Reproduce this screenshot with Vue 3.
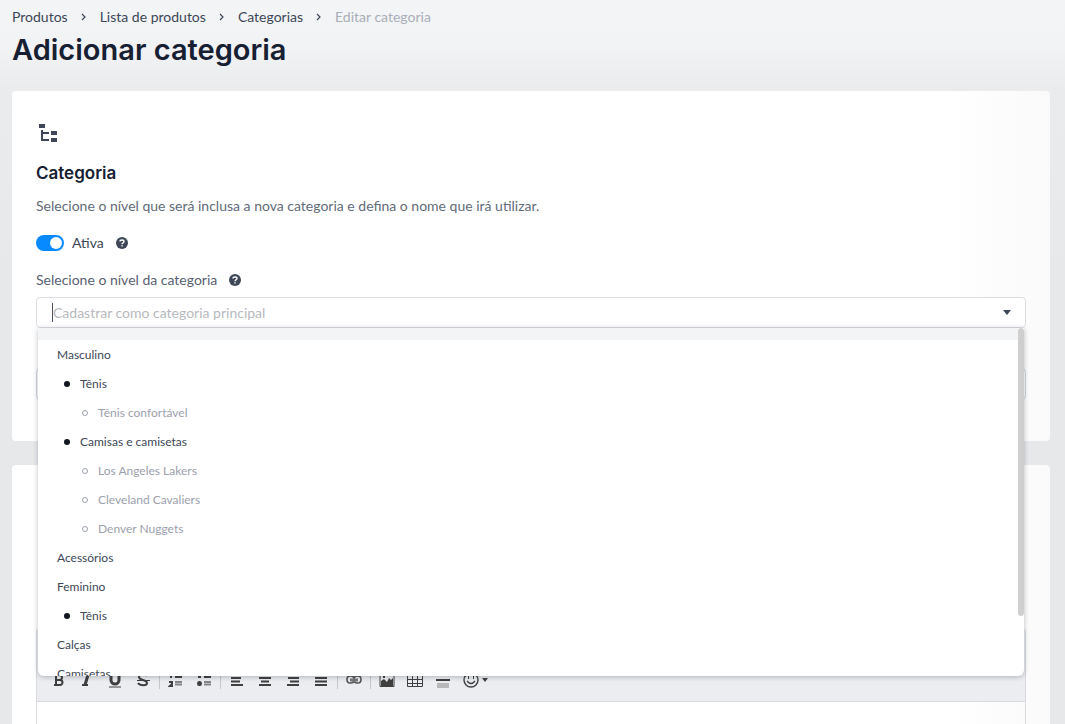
<script setup>
import { ref } from 'vue'

const trail = ['Produtos', 'Lista de produtos', 'Categorias']
const active = ref(true)
const options = [
  { text: 'Masculino', level: 0 },
  { text: 'Tênis', level: 1 },
  { text: 'Tênis confortável', level: 2 },
  { text: 'Camisas e camisetas', level: 1 },
  { text: 'Los Angeles Lakers', level: 2 },
  { text: 'Cleveland Cavaliers', level: 2 },
  { text: 'Denver Nuggets', level: 2 },
  { text: 'Acessórios', level: 0 },
  { text: 'Feminino', level: 0 },
  { text: 'Tênis', level: 1 },
  { text: 'Calças', level: 0 },
  { text: 'Camisetas', level: 0 },
]
const solid = (d, color = 'currentColor') => ({ d, fill: color })
const line = (d, w = 2, color = 'currentColor') => ({ d, stroke: color, 'stroke-width': w, fill: 'none' })
const groups = [
  [
    { name: 'Negrito', shapes: [line('M4 3H8.500A2.500 2.500 0 0 1 8.500 8H4M5 3V13H9A2.500 2.500 0 0 0 9 8', 2), line('M3 13H6M3 3H6')] },
    { name: 'Itálico', shapes: [line('M5 3H11M3 13H9'), line('M9 3L6 13', 3)] },
    { name: 'Sublinhado', shapes: [line('M4 2V8A4 4 0 0 0 12 8V2', 3), line('M2 15H14', 1)] },
    { name: 'Tachado', shapes: [line('M12 4C10 1 4 2 4 5C4 9 12 7 12 11C12 14 5 14 3 11', 2), line('M2 8.500H15', 1)] },
  ],
  [
    { name: 'Lista numerada', shapes: [line('M3 2V6M1 10H4V12L2 14H5', 2), line('M7 5H14', 2), line('M7 10H14M7 12.500H14', 2, '#858585')] },
    { name: 'Lista', shapes: [solid('M2 3H5V6H2ZM3 9H4Q6 9 6 11.500Q6 14 4 14H3Q1 14 1 11.500Q1 9 3 9'), line('M8 5H15', 2), line('M8 10H15M8 12.500H15', 2, '#858585')] },
  ],
  [
    { name: 'Alinhar à esquerda', shapes: [line('M2 3H14M2 6H12M2 9.500H11M2 13H14')] },
    { name: 'Centralizar', shapes: [line('M2 3H14M2 6H14M4 9.500H12M2 13H14')] },
    { name: 'Alinhar à direita', shapes: [line('M2 3H14M3 6H14M5 9.500H14M2 13H14')] },
    { name: 'Justificar', shapes: [line('M2 3H14M2 6H14M2 9.500H14M2 13H14')] },
  ],
  [
    { name: 'Link', shapes: [line('M4 4H5Q8 4 8 7.500Q8 11 5 11H4Q1 11 1 7.500Q1 4 4 4M11 4H12Q15 4 15 7.500Q15 11 12 11H11Q8 11 8 7.500Q8 4 11 4', 1.6, '#555'), line('M4 8H12', 3, '#777')] },
  ],
  [
    { name: 'Imagem', shapes: [line('M1 2H15V14.500H1Z', 1), solid('M2 14V9L5 7L8 10L10 6L12 8L14 6V14ZM4 4H6V6H4Z')] },
    { name: 'Tabela', shapes: [line('M.5 3.500H15.500V14.500H.5ZM.5 7.500H15.500M.5 11.500H15.500M5.500 3V14M10.500 3V14', 1)] },
    { name: 'Linha horizontal', shapes: [line('M1 8H15'), solid('M2 11H14V16H2Z', '#b8b8b8')] },
  ],
]
</script>

<template>
  <main class="page">
    <header>
      <nav class="crumbs" aria-label="Navegação">
        <template v-for="item in trail" :key="item">
          <a href="#">{{ item }}</a>
          <svg class="chevron" viewBox="0 0 6 8"><path d="M1 1L4 4L1 7" fill="none" stroke="currentColor" stroke-width="1.200" /></svg>
        </template>
        <span class="current">Editar categoria</span>
      </nav>
      <h1>Adicionar categoria</h1>
    </header>

    <section class="card">
      <svg class="tree" viewBox="0 0 20 20" fill="currentColor">
        <path d="M1 1H7V5H1ZM13 8H19V12H13ZM13 15H19V19H13Z" />
        <path d="M4 7V17H11M4 10H11" fill="none" stroke="currentColor" stroke-width="2" />
      </svg>
      <h2>Categoria</h2>
      <p>Selecione o nível que será inclusa a nova categoria e defina o nome que irá utilizar.</p>
      <div class="row toggle-row">
        <input id="ativa" v-model="active" class="switch" type="checkbox" role="switch">
        <label for="ativa">Ativa</label>
        <button class="help" type="button" aria-label="Ajuda">
          <svg viewBox="0 0 12 12"><circle cx="6" cy="6" r="6" fill="currentColor" /><path d="M4 4.500C4 2.500 8 2.500 8 4.500C8 6 6 5.800 6 7.200M6 8.300V9.600" fill="none" stroke="#fff" stroke-width="1.400" /></svg>
        </button>
      </div>
      <div class="row level-row">
        <label for="nivel">Selecione o nível da categoria</label>
        <button class="help" type="button" aria-label="Ajuda">
          <svg viewBox="0 0 12 12"><circle cx="6" cy="6" r="6" fill="currentColor" /><path d="M4 4.500C4 2.500 8 2.500 8 4.500C8 6 6 5.800 6 7.200M6 8.300V9.600" fill="none" stroke="#fff" stroke-width="1.400" /></svg>
        </button>
      </div>
      <div class="combo">
        <div class="control">
          <span class="caret" />
          <input id="nivel" type="text" placeholder="Cadastrar como categoria principal" role="combobox" aria-expanded="true" aria-controls="niveis">
          <svg class="arrow" viewBox="0 0 8 5"><path d="M0 0H8L4 5Z" fill="currentColor" /></svg>
        </div>
        <div class="menu">
          <ul id="niveis" role="listbox">
            <li class="blank" role="option" aria-label="Categoria principal" />
            <li v-for="(option, i) in options" :key="i" :class="'level' + option.level" role="option">
              <span v-if="option.level" class="bullet" />{{ option.text }}
            </li>
          </ul>
          <div class="track"><div class="thumb" /></div>
        </div>
      </div>
      <input class="field" type="text" aria-label="Nome da categoria">
    </section>

    <section class="card description">
      <div class="editor">
        <div class="toolbar">
          <template v-for="(group, g) in groups" :key="g">
            <button v-for="tool in group" :key="tool.name" class="tool" type="button" :aria-label="tool.name">
              <svg viewBox="0 0 16 16"><path v-for="(shape, s) in tool.shapes" :key="s" v-bind="shape" /></svg>
            </button>
            <span v-if="g < groups.length - 1" class="divider" />
          </template>
          <button class="tool smile" type="button" aria-label="Emoji">
            <svg viewBox="0 0 16 16"><circle cx="8" cy="8" r="7" fill="none" stroke="currentColor" stroke-width="1.400" /><path d="M4 9Q8 14 12 9" fill="none" stroke="currentColor" stroke-width="1.400" /><path d="M5 4H6V7H5ZM10 4H11V7H10Z" fill="currentColor" /></svg>
            <svg class="mini" viewBox="0 0 6 4"><path d="M0 0H6L3 4Z" fill="currentColor" /></svg>
          </button>
        </div>
        <textarea aria-label="Descrição" />
      </div>
    </section>
  </main>
</template>

<style>
body { margin: 0; }
</style>

<style scoped>
* { box-sizing: border-box; }
.page {
  min-height: 100vh;
  padding: 8px 15px 0 12px;
  display: flex;
  flex-direction: column;
  color: #3d4757;
  font: 14px/18px Lato, "Noto Sans", sans-serif;
  background: linear-gradient(#f4f5f7 0, #f1f2f4 50px, #eaebed 92px, #e7e8ea 300px, #e7e8ea 100%);
}
.crumbs { display: flex; align-items: center; height: 18px; }
.crumbs a { color: #3d4757; text-decoration: none; }
.chevron { width: 6px; height: 8px; margin: 0 13px; }
.current { color: #a9aeb9; }
h1 { margin: 5px 0 0; font: 600 29px/38px Inter, sans-serif; color: #172033; }
.card {
  margin-top: 22px;
  padding: 32px 24px 41px;
  border-radius: 4px;
  background: linear-gradient(90deg, #fff 90%, #fafafa);
}
.tree { display: block; width: 20px; height: 20px; margin-left: 2px; }
h2 { margin: 18px 0 0; font: 600 17px/24px Inter, sans-serif; color: #172033; }
p { margin: 12px 0 0; color: #626b7a; }
.row { display: flex; align-items: center; height: 18px; margin-top: 19px; }
.level-row label { color: #586171; }
.switch {
  appearance: none;
  width: 28px;
  height: 16px;
  margin: 0 8px 0 0;
  padding: 2px;
  border-radius: 8px;
  background: #b8bec8;
  display: flex;
}
.switch::before { content: ""; width: 12px; height: 12px; border-radius: 50%; background: #fff; }
.switch:checked { background: #078aff; justify-content: flex-end; }
.help { width: 12px; height: 12px; margin: 0 0 0 12px; padding: 0; border: 0; background: none; color: #3d4757; }
.help svg { display: block; width: 12px; height: 12px; }
.combo { position: relative; margin-top: 8px; }
.control {
  display: flex;
  align-items: center;
  height: 31px;
  padding: 0 14px 0 15px;
  border: 1px solid #dadde2;
  border-radius: 4px;
  background: #fff;
}
.caret { width: 1px; height: 19px; background: #4a5262; }
.control input { flex: 1; min-width: 0; height: 19px; padding: 0; border: 0; outline: 0; background: none; font: inherit; }
.control input::placeholder { color: #b7b9be; opacity: 1; }
.arrow { width: 8px; height: 5px; }
.menu {
  position: absolute;
  z-index: 2;
  top: 31px;
  left: 2px;
  right: 2px;
  height: 348px;
  overflow: hidden;
  display: flex;
  border-radius: 0 0 6px 6px;
  background: #fff;
  box-shadow: 0 1px 5px rgba(30, 40, 55, .3);
}
.menu ul { flex: 1; margin: 0; padding: 0; list-style: none; font-size: 12px; line-height: 29px; }
.menu li { display: flex; align-items: center; height: 29px; padding-left: 19px; color: #3d4757; }
.menu .blank { height: 12px; background: #f3f4f6; }
.menu .level1 { padding-left: 26px; }
.menu .level2 { padding-left: 44px; color: #9ca1ac; }
.bullet { width: 6px; height: 6px; margin-right: 10px; border-radius: 50%; background: #111820; }
.level2 .bullet { background: none; border: 1px solid #9ca1ac; }
.track { width: 6px; }
.thumb { height: 288px; border-radius: 3px; background: #cfcfcf; }
.field { display: block; width: 100%; height: 32px; margin-top: 40px; border: 1px solid #d0d4df; border-radius: 4px; background: #fff; }
.description { flex: 1; display: flex; flex-direction: column; margin-top: 24px; padding: 163px 24px 0; border-radius: 4px 4px 0 0; }
.editor { flex: 1; display: flex; flex-direction: column; border: 1px solid #d8dade; border-bottom: 0; border-radius: 4px 4px 0 0; }
.toolbar { display: flex; align-items: center; padding: 37px 8px 7px; border-bottom: 1px solid #d8dade; background: #ecedf1; }
.tool { display: flex; align-items: center; justify-content: center; width: 28px; height: 28px; padding: 0; border: 0; background: none; color: #3f3f3f; }
.tool svg { width: 16px; height: 16px; }
.divider { width: 1px; height: 18px; margin: 0 2px; background: #c5c7cb; }
.smile { width: 36px; gap: 3px; }
.tool .mini { width: 6px; height: 4px; }
textarea { flex: 1; width: 100%; min-height: 22px; height: 22px; padding: 8px; border: 0; outline: 0; resize: none; background: transparent; }
</style>
